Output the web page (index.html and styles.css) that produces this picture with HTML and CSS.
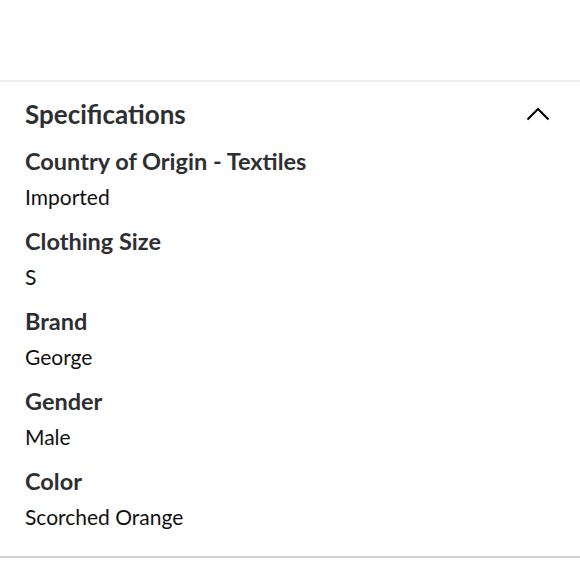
FILE: index.html
```html
<!DOCTYPE html>
<html>
<head>
<meta charset="utf-8">
<link rel="stylesheet" href="styles.css">
</head>
<body>
<div class="top-space"></div>
<section class="specs">
  <div class="specs-header">
    <h2 class="specs-title">Specifications</h2>
    <svg class="chevron" width="24" height="14" viewBox="0 0 24 14"><path d="M1.5 12.5 L12 2 L22.5 12.5" fill="none" stroke="#000" stroke-width="2"/></svg>
  </div>
  <dl class="spec-list">
    <div class="spec-item"><dt>Country of Origin - Textiles</dt><dd>Imported</dd></div>
    <div class="spec-item"><dt>Clothing Size</dt><dd>S</dd></div>
    <div class="spec-item"><dt>Brand</dt><dd>George</dd></div>
    <div class="spec-item"><dt>Gender</dt><dd>Male</dd></div>
    <div class="spec-item"><dt>Color</dt><dd>Scorched Orange</dd></div>
  </dl>
</section>
</body>
</html>
```
FILE: styles.css
```css
html, body { margin: 0; padding: 0; background: #fff; }
body { font-family: Lato, "Noto Sans", sans-serif; color: #2e2f32; width: 580px; }
.top-space { height: 80px; }
.specs { border-top: 2px solid #eeeeee; border-bottom: 2px solid #d0d0d0; padding: 16px 25px 26px; }
.specs-header { display: flex; align-items: center; justify-content: space-between; height: 32px; }
.specs-title { margin: 0; font-size: 26px; font-weight: 700; line-height: 32px; }
.chevron { margin-right: 5px; }
.spec-list { margin: 0; padding: 0; }
.spec-item { margin-top: 17px; }
.spec-item dt { font-size: 23.5px; font-weight: 700; line-height: 28px; }
.spec-item dd { margin: 8px 0 0; font-size: 21px; line-height: 27px; color: #111; }
```
